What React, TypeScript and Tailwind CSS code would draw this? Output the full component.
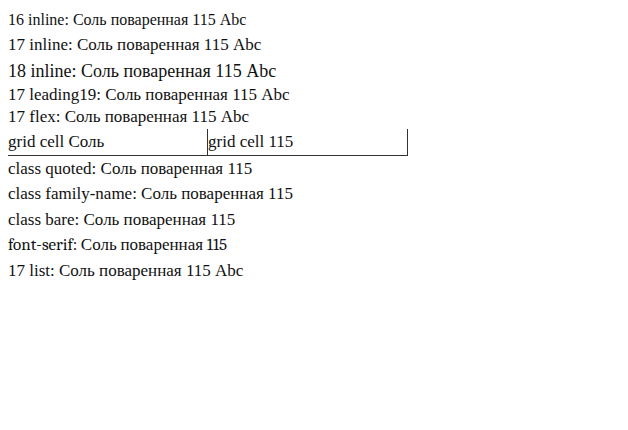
import React from "react";

export default function App() {
  return (
    <div className="p-2 text-[#111]">
      <div className="text-[16px]" style={{ fontFamily: '"Liberation Serif"' }}>16 inline: Соль поваренная 115 Abc</div>
      <div className="text-[17px]" style={{ fontFamily: '"Liberation Serif"' }}>17 inline: Соль поваренная 115 Abc</div>
      <div className="text-[18px]" style={{ fontFamily: '"Liberation Serif"' }}>18 inline: Соль поваренная 115 Abc</div>
      <div className="text-[17px] leading-[19px]" style={{ fontFamily: '"Liberation Serif"' }}>17 leading19: Соль поваренная 115 Abc</div>
      <div className="text-[17px] whitespace-nowrap flex items-center" style={{ fontFamily: '"Liberation Serif"' }}>17 flex: Соль поваренная 115 Abc</div>
      <div className="grid grid-cols-[200px_200px] text-[17px]" style={{ fontFamily: '"Liberation Serif"' }}>
        <div className="border-r border-b border-[#333]">grid cell Соль</div>
        <div className="border-r border-b border-[#333]">grid cell 115</div>
      </div>
      <div className="text-[17px] font-['Liberation_Serif']">class quoted: Соль поваренная 115</div>
      <div className="text-[17px] font-[family-name:Liberation_Serif]">class family-name: Соль поваренная 115</div>
      <div className="text-[17px] font-[Liberation_Serif]">class bare: Соль поваренная 115</div>
      <div className="text-[17px] font-serif">font-serif: Соль поваренная 115</div>
      <div className="text-[17px]" style={{ fontFamily: '"Liberation Serif", "Times New Roman", serif' }}>17 list: Соль поваренная 115 Abc</div>
    </div>
  );
}
